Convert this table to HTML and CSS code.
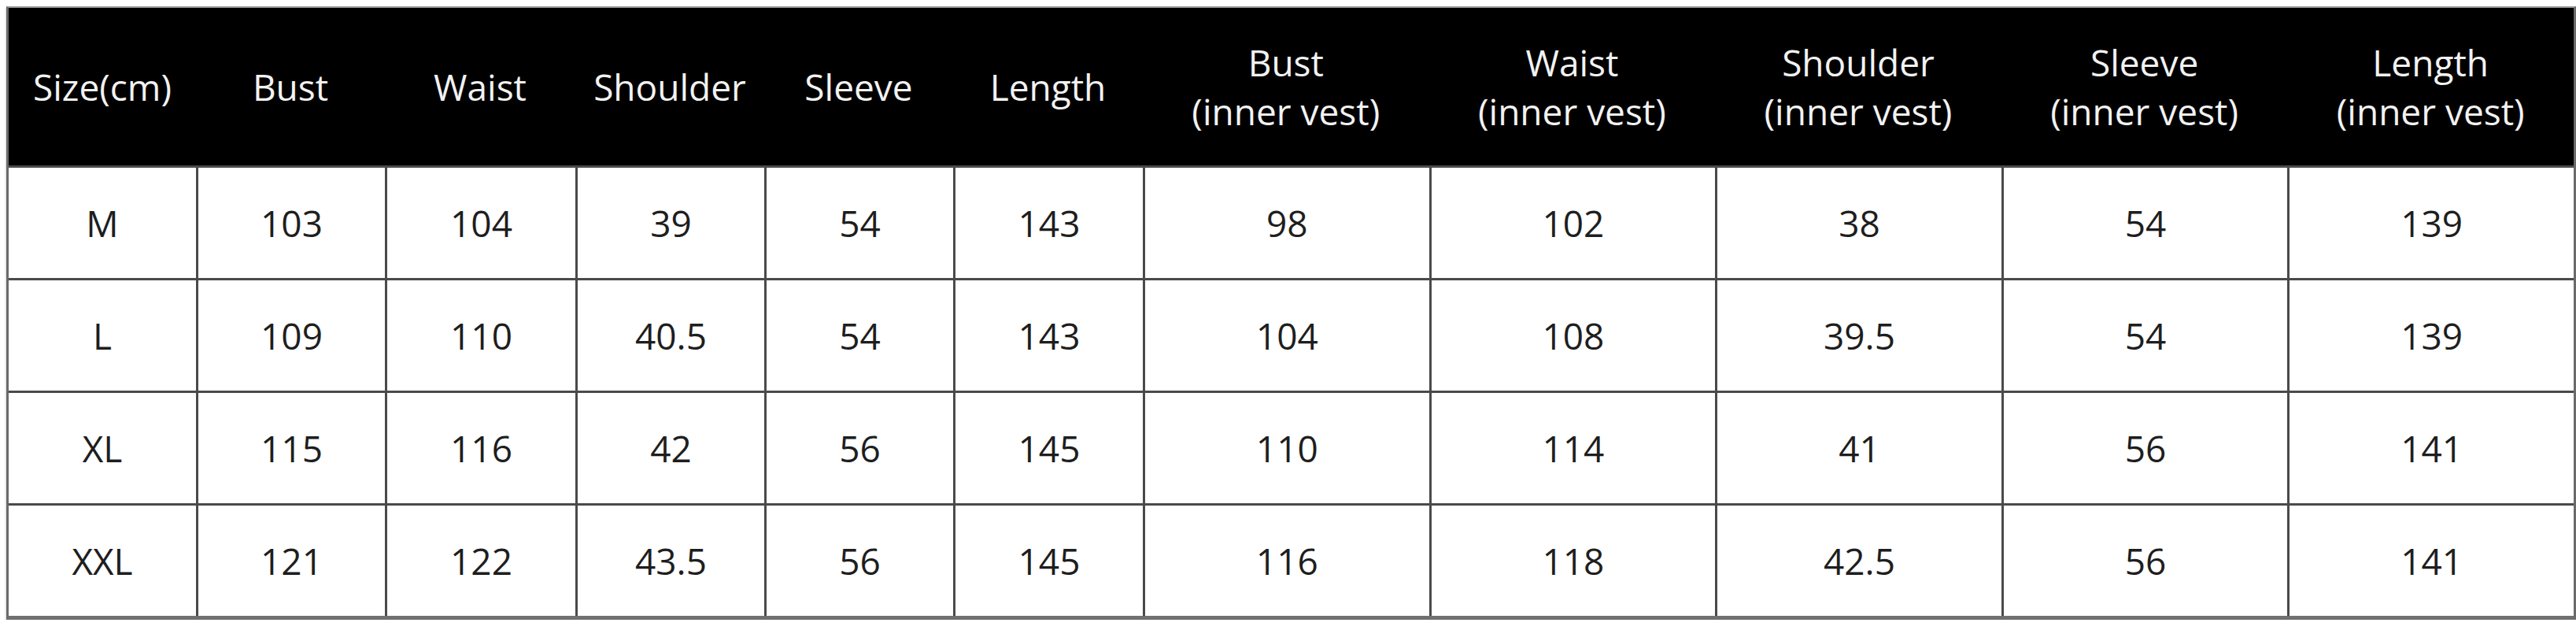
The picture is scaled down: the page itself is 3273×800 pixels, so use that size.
FILE: index.html
```html
<!DOCTYPE html>
<html lang="en">
<head>
<meta charset="utf-8">
<title>Size chart</title>
<link rel="stylesheet" href="styles.css">
</head>
<body>
<div class="sheet">
  <div class="line head">
    <div class="cell">Size(cm)</div>
    <div class="cell">Bust</div>
    <div class="cell">Waist</div>
    <div class="cell">Shoulder</div>
    <div class="cell">Sleeve</div>
    <div class="cell">Length</div>
    <div class="cell">Bust<br>(inner vest)</div>
    <div class="cell">Waist<br>(inner vest)</div>
    <div class="cell">Shoulder<br>(inner vest)</div>
    <div class="cell">Sleeve<br>(inner vest)</div>
    <div class="cell">Length<br>(inner vest)</div>
  </div>
  <div class="line row">
    <div class="cell">M</div><div class="cell">103</div><div class="cell">104</div><div class="cell">39</div><div class="cell">54</div><div class="cell">143</div><div class="cell">98</div><div class="cell">102</div><div class="cell">38</div><div class="cell">54</div><div class="cell">139</div>
  </div>
  <div class="line row">
    <div class="cell">L</div><div class="cell">109</div><div class="cell">110</div><div class="cell">40.5</div><div class="cell">54</div><div class="cell">143</div><div class="cell">104</div><div class="cell">108</div><div class="cell">39.5</div><div class="cell">54</div><div class="cell">139</div>
  </div>
  <div class="line row">
    <div class="cell">XL</div><div class="cell">115</div><div class="cell">116</div><div class="cell">42</div><div class="cell">56</div><div class="cell">145</div><div class="cell">110</div><div class="cell">114</div><div class="cell">41</div><div class="cell">56</div><div class="cell">141</div>
  </div>
  <div class="line row">
    <div class="cell">XXL</div><div class="cell">121</div><div class="cell">122</div><div class="cell">43.5</div><div class="cell">56</div><div class="cell">145</div><div class="cell">116</div><div class="cell">118</div><div class="cell">42.5</div><div class="cell">56</div><div class="cell">141</div>
  </div>
</div>
</body>
</html>
```

FILE: styles.css
```css
html, body {
  margin: 0;
  padding: 0;
  background: #ffffff;
}

body {
  padding: 8px 0 0 8px;
  font-family: "Open Sans", "Noto Sans", "Liberation Sans", sans-serif;
}

.sheet {
  width: 3259px;
  border-left: 3px solid #6a6a6a;
  border-right: 3px solid #6a6a6a;
  border-top: 2px solid #9a9a9a;
  border-bottom: 5px solid #707070;
  box-shadow: 0 2px 3px rgba(0, 0, 0, 0.25);
}

.line {
  display: grid;
  grid-template-columns: 238px 240px 242px 240px 240px 241px repeat(5, 1fr);
}

.cell {
  display: flex;
  align-items: center;
  justify-content: center;
  text-align: center;
  font-size: 46px;
}

.head {
  height: 200px;
  background: #000000;
  color: #f2f2f2;
  line-height: 1.34;
}

.head .cell {
  padding-top: 2px;
}

.row {
  height: 140px;
  border-top: 3px solid #4a4a4a;
  color: #1e1e1e;
}

.row .cell + .cell {
  border-left: 3px solid #4a4a4a;
}
```
